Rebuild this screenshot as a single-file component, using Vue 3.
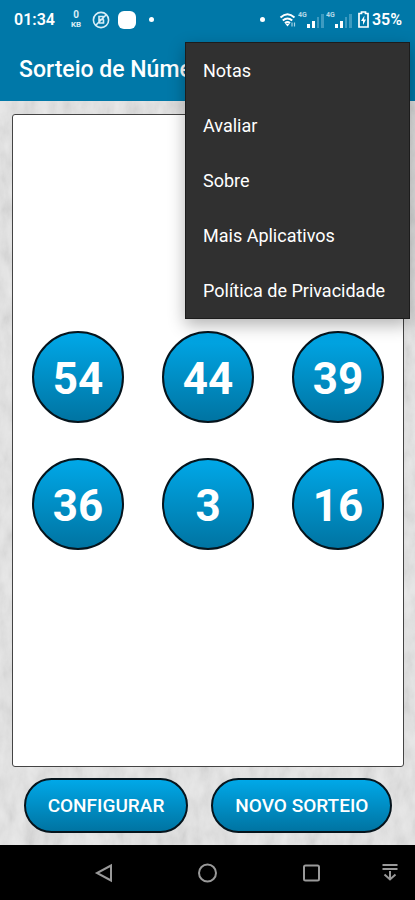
<script setup>
import { ref } from "vue";

const numbers = ref([54, 44, 39, 36, 3, 16]);
const menuItems = ["Notas", "Avaliar", "Sobre", "Mais Aplicativos", "Política de Privacidade"];
</script>

<template>
  <div class="app">
    <header class="header">
      <div class="status-bar">
        <span class="clock">01:34</span>
        <span class="net-speed"><b>0</b><small>KB</small></span>
        <svg class="icon-nfc" width="18" height="18" viewBox="0 0 18 18" fill="none" stroke="#d9eef7" stroke-width="1.6">
          <circle cx="9" cy="9" r="7.6" />
          <path d="M3.800 14.200 14.200 3.800M7 12.500V5.500h4v3H7.500M7 12h4.500V8.500" />
        </svg>
        <span class="app-badge"></span>
        <span class="dot"></span>
        <span class="spacer"></span>
        <span class="dot"></span>
        <svg class="icon-wifi" width="18" height="16" viewBox="0 0 18 16" fill="none" stroke="#fff" stroke-width="2">
          <path d="M1.500 5.500Q8.500-1 15.500 5.500M3.800 8.600Q8.500 4.300 13.200 8.600M6 11.300Q8.500 9 11 11.300" />
          <path d="m6.500 12 2 2.500 2-2.500z" fill="#fff" stroke="none" />
          <path d="M13 14.500v-4M15.500 10.500v4" stroke="#a5d2e5" stroke-width="1.200" />
        </svg>
        <svg v-for="sim in 2" :key="sim" class="icon-signal" width="27" height="22" viewBox="0 0 27 22">
          <text x="0" y="8" font-size="7" font-weight="700" fill="#b5d9e9">4G</text>
          <path d="M9 15h3v4H9zM14 12h3v7h-3z" fill="#fff" />
          <path d="M19 8h2v11h-2zM23 5h3v14h-3z" fill="#3d9bc1" />
        </svg>
        <svg class="icon-battery" width="11" height="17" viewBox="0 0 11 17">
          <path d="M3.500 1h4v1.500h2.500V16H1V2.500h2.500z" fill="none" stroke="#fff" stroke-width="1.700" />
          <path d="M6.500 4.500 3 10h2v4l3-5.500H6z" fill="#fff" />
        </svg>
        <span class="battery">35%</span>
      </div>
      <h1 class="title">Sorteio de Números</h1>
      <nav class="menu">
        <button v-for="item in menuItems" :key="item" type="button" class="menu-item">{{ item }}</button>
      </nav>
    </header>

    <main class="content">
      <svg class="texture" width="100%" height="100%" aria-hidden="true">
        <filter id="concrete" x="0" y="0" width="100%" height="100%">
          <feTurbulence type="fractalNoise" baseFrequency="0.08 0.04" numOctaves="5" seed="4" />
          <feColorMatrix values="0.16 0 0 0 0.76  0.16 0 0 0 0.76  0.16 0 0 0 0.76  0 0 0 0 1" color-interpolation-filters="sRGB" />
        </filter>
        <rect width="100%" height="100%" filter="url(#concrete)" />
      </svg>
      <section class="board">
        <span v-for="number in numbers" :key="number" class="ball">{{ number }}</span>
      </section>
      <div class="actions">
        <button type="button" class="action">CONFIGURAR</button>
        <button type="button" class="action">NOVO SORTEIO</button>
      </div>
    </main>

    <footer class="nav-bar">
      <button type="button" aria-label="Voltar">
        <svg width="20" height="20" viewBox="0 0 20 20"><path d="M17 2.500v15L3 10z" /></svg>
      </button>
      <button type="button" aria-label="Início">
        <svg width="20" height="20" viewBox="0 0 20 20"><circle cx="10.500" cy="10" r="8.500" /></svg>
      </button>
      <button type="button" aria-label="Recentes">
        <svg width="20" height="20" viewBox="0 0 20 20"><rect x="3" y="2.500" width="15" height="15" rx="1.500" /></svg>
      </button>
      <button type="button" class="hide-bar" aria-label="Ocultar barra">
        <svg width="20" height="20" viewBox="0 0 20 20"><path d="M2.500 3h15M2.500 7h15M10 9v8M4.500 12.500l5.500 5 5.500-5" /></svg>
      </button>
    </footer>
  </div>
</template>

<style>
body {
  margin: 0;
}
</style>

<style scoped>
.app {
  display: flex;
  flex-direction: column;
  min-height: 100vh;
  font-family: Roboto, "Liberation Sans", sans-serif;
  color: #fff;
}
button {
  font-family: inherit;
  color: inherit;
  cursor: pointer;
}
.header {
  position: relative;
  z-index: 2;
  background: #0078a8;
}
.status-bar {
  display: flex;
  align-items: center;
  height: 39px;
  padding: 0 13px 0 14px;
}
.clock,
.battery {
  font-size: 16px;
  font-weight: 600;
}
.net-speed {
  display: flex;
  flex-direction: column;
  align-items: center;
  margin-left: 16px;
  font-size: 10px;
  line-height: 10px;
  color: #d9eef7;
}
.net-speed small {
  font-size: 8px;
  font-weight: 700;
  line-height: 9px;
}
.icon-nfc {
  margin-left: 11px;
}
.app-badge {
  width: 18px;
  height: 18px;
  margin: 0 13px 0 8px;
  border-radius: 6px;
  background: #fff;
}
.dot {
  width: 5px;
  height: 5px;
  border-radius: 50%;
  background: #fff;
}
.spacer {
  flex: 1;
}
.icon-wifi {
  margin-left: 14px;
}
.icon-signal {
  margin-left: 1px;
}
.icon-battery {
  margin: 0 3px 0 5px;
}
.title {
  margin: 0;
  padding: 0 19px;
  font-size: 23px;
  font-weight: 500;
  line-height: 62px;
  white-space: nowrap;
  overflow: hidden;
}
.menu {
  position: absolute;
  top: 42px;
  right: 5px;
  display: flex;
  flex-direction: column;
  box-sizing: border-box;
  width: 225px;
  border: 1px solid #1c1c1c;
  background: #303030;
  box-shadow: 0 6px 16px rgba(0, 0, 0, 0.3);
}
.menu-item {
  height: 55px;
  padding: 0 17px;
  border: 0;
  background: none;
  font-size: 18px;
  text-align: left;
  white-space: nowrap;
}
.content {
  position: relative;
  z-index: 1;
  flex: 1;
  display: flex;
  flex-direction: column;
  padding: 13px 11px 12px 12px;
  background: #d8d8d8;
}
.texture {
  position: absolute;
  inset: 0;
  z-index: -1;
}
.board {
  flex: 1;
  display: grid;
  grid-template-columns: repeat(3, 1fr);
  align-content: center;
  justify-items: center;
  gap: 35px 0;
  border: 1px solid #444;
  border-radius: 3px;
  background: #fff;
}
.ball {
  display: flex;
  align-items: center;
  justify-content: center;
  box-sizing: border-box;
  width: 92px;
  height: 92px;
  padding-top: 3px;
  border: 2px solid #06141c;
  border-radius: 50%;
  background: linear-gradient(#00a8e8, #0074a2);
  font-size: 44px;
  font-weight: 700;
}
.actions {
  display: flex;
  justify-content: center;
  gap: 23px;
  padding-top: 11px;
}
.action {
  height: 55px;
  padding: 0 22px;
  border: 2px solid #06141c;
  border-radius: 28px;
  background: linear-gradient(#00a8e8, #0074a2);
  font-size: 19px;
  font-weight: 500;
}
.nav-bar {
  display: grid;
  grid-template-columns: repeat(3, 1fr);
  align-items: center;
  position: relative;
  height: 55px;
  padding: 0 52px;
  background: #000;
}
.nav-bar button {
  display: flex;
  justify-content: center;
  padding: 0;
  border: 0;
  background: none;
}
.nav-bar svg {
  fill: none;
  stroke: #999;
  stroke-width: 2;
}
.nav-bar .hide-bar {
  position: absolute;
  top: 17px;
  right: 15px;
}
</style>
